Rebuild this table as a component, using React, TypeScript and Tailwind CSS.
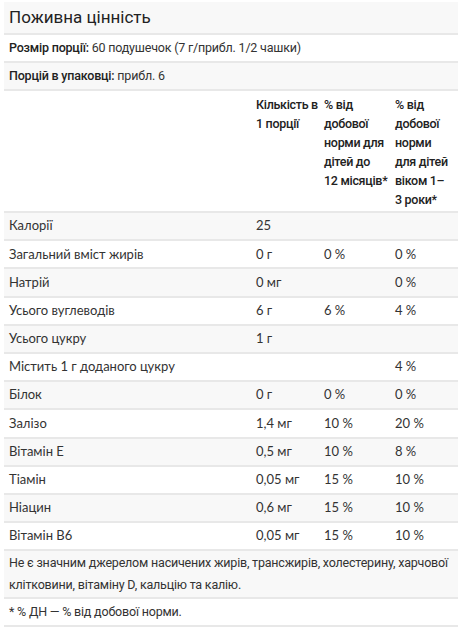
import React from "react";

type Row = { name: string; amount?: string; infant?: string; toddler?: string };

const ROWS: Row[] = [
  { name: "Калорії", amount: "25" },
  { name: "Загальний вміст жирів", amount: "0 г", infant: "0 %", toddler: "0 %" },
  { name: "Натрій", amount: "0 мг", toddler: "0 %" },
  { name: "Усього вуглеводів", amount: "6 г", infant: "6 %", toddler: "4 %" },
  { name: "Усього цукру", amount: "1 г" },
  { name: "Містить 1 г доданого цукру", toddler: "4 %" },
  { name: "Білок", amount: "0 г", infant: "0 %", toddler: "0 %" },
  { name: "Залізо", amount: "1,4 мг", infant: "10 %", toddler: "20 %" },
  { name: "Вітамін Е", amount: "0,5 мг", infant: "10 %", toddler: "8 %" },
  { name: "Тіамін", amount: "0,05 мг", infant: "15 %", toddler: "10 %" },
  { name: "Ніацин", amount: "0,6 мг", infant: "15 %", toddler: "10 %" },
  { name: "Вітамін В6", amount: "0,05 мг", infant: "15 %", toddler: "10 %" },
];

const HEAD_COLS = [
  ["Кількість в", "1 порції"],
  ["% від", "добової", "норми для", "дітей до", "12 місяців*"],
  ["% від", "добової", "норми", "для дітей", "віком 1–", "3 роки*"],
];

const head = "font-['Roboto',sans-serif]";
const body = "font-['Lato',sans-serif]";

export default function App() {
  return (
    <div className="bg-white px-[4px] pt-[2px] text-[#333]">
      <table className="w-[454px] table-fixed border-collapse text-[13px]">
        <colgroup>
          <col className="w-[247px]" />
          <col className="w-[68px]" />
          <col className="w-[71px]" />
          <col className="w-[68px]" />
        </colgroup>
        <tbody>
          <tr className="border-b-2 border-[#e8e8e8] bg-[#f8f8f8]">
            <td colSpan={4} className={`${head} h-[32px] px-[5px] text-[17px] text-[#222]`}>
              Поживна цінність
            </td>
          </tr>
          <tr className="border-b-2 border-[#e8e8e8]">
            <td colSpan={4} className={`${head} h-[28px] px-[5px] text-[12.5px] tracking-[-0.2px]`}>
              <span className="font-medium text-[#222]">Розмір порції:</span> 60 подушечок (7 г/прибл. 1/2 чашки)
            </td>
          </tr>
          <tr className="border-b-2 border-[#e8e8e8] bg-[#f8f8f8]">
            <td colSpan={4} className={`${head} h-[28px] px-[5px] text-[12.5px] tracking-[-0.2px]`}>
              <span className="font-medium text-[#222]">Порцій в упаковці:</span> прибл. 6
            </td>
          </tr>
          <tr className="border-b-2 border-[#e8e8e8]">
            <td />
            {HEAD_COLS.map((lines, i) => (
              <td
                key={i}
                className={`${head} pl-[5px] pr-0 pb-[2px] pt-[4px] align-top text-[12.5px] font-medium leading-[19px] tracking-[-0.3px] text-[#222]`}
              >
                {lines.map((l) => (
                  <span key={l} className="block whitespace-nowrap">
                    {l}
                  </span>
                ))}
              </td>
            ))}
          </tr>
          {ROWS.map((r, i) => (
            <tr
              key={r.name}
              className={`border-b-2 border-[#e8e8e8] ${i % 2 === 0 ? "bg-[#f8f8f8]" : "bg-white"}`}
            >
              <td className={`${body} h-[28.2px] px-[5px]`}>{r.name}</td>
              <td className={`${body} px-[5px]`}>{r.amount}</td>
              <td className={`${body} px-[5px]`}>{r.infant}</td>
              <td className={`${body} px-[5px]`}>{r.toddler}</td>
            </tr>
          ))}
          <tr className="border-b-2 border-[#e8e8e8] bg-[#f8f8f8]">
            <td colSpan={4} className={`${head} px-[5px] py-[1px] text-[12.5px] leading-[22px] tracking-[-0.2px]`}>
              Не є значним джерелом насичених жирів, трансжирів, холестерину, харчової клітковини, вітаміну D, кальцію та калію.
            </td>
          </tr>
          <tr className="border-b-2 border-[#e8e8e8]">
            <td colSpan={4} className={`${head} h-[28px] px-[5px] text-[12.5px] tracking-[-0.2px]`}>
              * % ДН — % від добової норми.
            </td>
          </tr>
        </tbody>
      </table>
    </div>
  );
}
